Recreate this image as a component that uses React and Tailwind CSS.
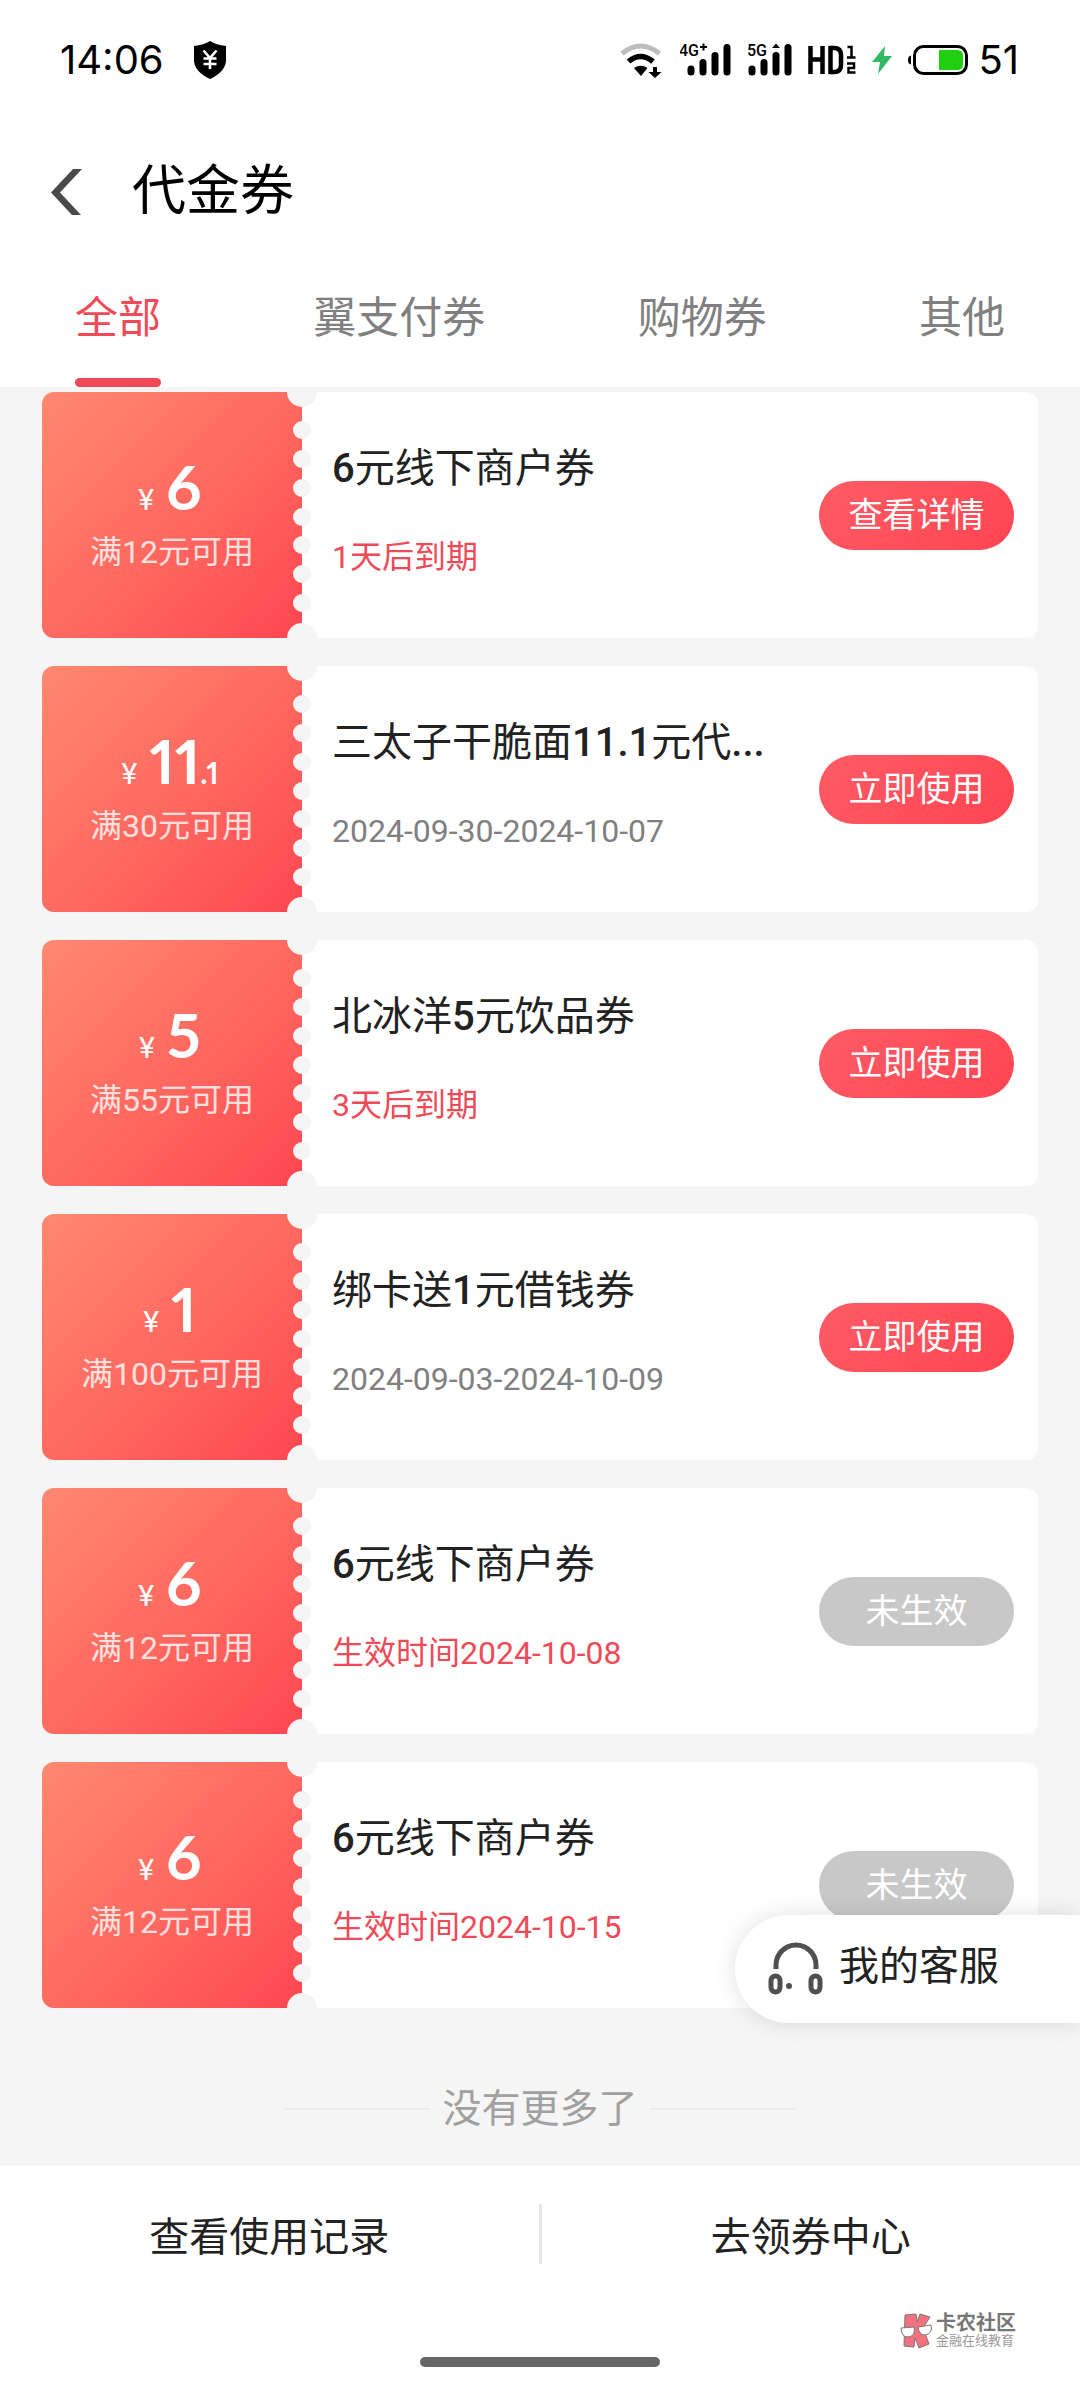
import { useState } from "react";
import clsx from "clsx";

const TABS = ["全部", "翼支付券", "购物券", "其他"];

const COUPONS = [
  { id: 1, amount: "6", limit: "满12元可用", title: "6元线下商户券", note: "1天后到期", urgent: true, action: "查看详情" },
  { id: 2, amount: "11", decimal: ".1", limit: "满30元可用", title: "三太子干脆面11.1元代...", note: "2024-09-30-2024-10-07", action: "立即使用" },
  { id: 3, amount: "5", limit: "满55元可用", title: "北冰洋5元饮品券", note: "3天后到期", urgent: true, action: "立即使用" },
  { id: 4, amount: "1", limit: "满100元可用", title: "绑卡送1元借钱券", note: "2024-09-03-2024-10-09", action: "立即使用" },
  { id: 5, amount: "6", limit: "满12元可用", title: "6元线下商户券", note: "生效时间2024-10-08", urgent: true, action: "未生效", disabled: true },
  { id: 6, amount: "6", limit: "满12元可用", title: "6元线下商户券", note: "生效时间2024-10-15", urgent: true, action: "未生效", disabled: true },
];

const WifiIcon = () => (
  <svg className="h-9 w-11" viewBox="0 0 44 36" fill="none">
    <path d="M2 11.500Q20.500 -3.500 39.500 11.500" stroke="#bdbdbd" strokeWidth="5" />
    <path d="M8.500 19.500Q20.500 9.500 33 19.500" stroke="#000" strokeWidth="5.500" />
    <path d="M14 26Q20.500 21.500 27.500 26L21 34Z" fill="#000" />
    <path d="M33 25h4v5h4.500l-6.500 6-6.500-6h4.500z" fill="#000" />
  </svg>
);

const BARS = "M0 27v3M12 20.500V30";

const Signal4G = () => (
  <svg className="h-9 w-13" viewBox="0 0 52 36">
    <text x="-1" y="14" fontSize="16" fontWeight="500" fontFamily="Roboto, sans-serif">4G</text>
    <path d="M20 5h7M23.500 1.500v7" stroke="#000" strokeWidth="2" />
    <g transform="translate(11)" stroke="#000" strokeWidth="7" strokeLinecap="round">
      <path d={BARS} />
      <path d="M24 13.500V30M36 5.500V30" />
    </g>
  </svg>
);

const Signal5G = () => (
  <svg className="h-9 w-11" viewBox="0 0 44 36">
    <text x="-1" y="14" fontSize="16" fontWeight="500" fontFamily="Roboto, sans-serif">5G</text>
    <path d="M24 6l4-4.500 4 4.500z" />
    <g transform="translate(4)" stroke="#000" strokeWidth="7" strokeLinecap="round">
      <path d={BARS} />
      <path d="M24 13.500V30M36 5.500V30" />
    </g>
  </svg>
);

const BatteryIcon = () => (
  <svg className="h-8 w-15" viewBox="0 0 60 32">
    <path d="M3 11.500Q0 12 0 16t3 4.500z" />
    <rect x="6.500" y="2.500" width="52" height="27" rx="9" fill="none" stroke="#000" strokeWidth="3" />
    <path d="M31 6h18q6 0 6 6v8q0 6-6 6H31z" fill="#20d010" />
  </svg>
);

const StatusBar = () => (
  <div className="flex h-30 items-center justify-between pr-[61px] pl-15">
    <div className="flex items-center gap-7">
      <span className="font-[Inter] text-[40px] leading-none">14:06</span>
      <svg className="h-10 w-9" viewBox="0 0 36 40">
        <path d="M18 1Q24 5 34 6V21Q33 32 18 39Q3 32 2 21V6Q12 5 18 1Z" />
        <path d="M11.500 10.500L18 18l6.500-7.500M18 18v11M11.500 18.500h13M11.500 24h13" fill="none" stroke="#fff" strokeWidth="2.600" />
      </svg>
    </div>
    <div className="flex items-center gap-4">
      <WifiIcon />
      <Signal4G />
      <Signal5G />
      <svg className="h-9 w-12" viewBox="0 0 48 36">
        <path d="M2.500 4v28M14.500 4v28M2.500 17.500h12M22.500 6v24h3.500q7 0 7-7V13q0-7-7-7z" fill="none" stroke="#000" strokeWidth="4.500" />
        <path d="M39.500 5h4v10.500M39 15.500h8.500M39 21.500h7v4.500h-5.500v4.500h7" fill="none" stroke="#000" strokeWidth="2.500" />
      </svg>
      <svg className="h-8 w-5" viewBox="0 0 20 32">
        <path d="M13 2L0 18h8L6 30 20 12h-8z" fill="#33b864" />
      </svg>
      <div className="flex items-center gap-[10px]">
        <BatteryIcon />
        <span className="font-[Inter] text-[40px] leading-none">51</span>
      </div>
    </div>
  </div>
);

// Grey notches punched along the seam between the two halves of a coupon
const Perforation = () => (
  <svg className="absolute top-0 left-[245px] h-full w-[30px]" viewBox="0 0 30 246" fill="#f5f5f5" aria-hidden="true">
    <circle cx="15" cy="0" r="15" />
    {[38, 67, 96, 125, 153, 182, 211].map((cy) => (
      <circle key={cy} cx="15" cy={cy} r="9" />
    ))}
    <circle cx="15" cy="246" r="15" />
  </svg>
);

// Numbers in a title are set heavier than the characters around them
const CouponTitle = ({ text }) => (
  <h2 className="text-[40px] leading-15 whitespace-nowrap text-[#222]">
    {text.split(/([\d.]+)/).map((part, i) =>
      i % 2 ? (
        <span key={i} className="font-medium">{part}</span>
      ) : (
        part
      )
    )}
  </h2>
);

const CouponCard = ({ coupon }) => (
  <li className="relative flex h-[246px] overflow-hidden rounded-xl bg-white">
    <div className="flex w-[260px] shrink-0 flex-col items-center bg-linear-135 from-[#ff8870] to-[#ff4551] pt-16 text-white">
      <p className="flex items-baseline gap-3 pr-1 font-[Lato] leading-15 proportional-nums">
        <span className="font-[Roboto] text-[30px]">¥</span>
        <span className="text-[62px] font-bold">
          {coupon.amount}
          {coupon.decimal && <span className="text-[30px]">{coupon.decimal}</span>}
        </span>
      </p>
      <p className="text-[32px] leading-11 whitespace-nowrap text-white/80">{coupon.limit}</p>
    </div>
    <Perforation />
    <div className="flex min-w-0 flex-1 items-center gap-12 pr-6 pl-[30px]">
      <div className="flex h-full min-w-0 flex-1 flex-col gap-8 pt-[47px]">
        <CouponTitle text={coupon.title} />
        <p className={clsx("text-[32px] leading-13 whitespace-nowrap", coupon.urgent ? "text-[#ee4a58]" : "text-[#808080]")}>
          {coupon.note}
        </p>
      </div>
      <button
        type="button"
        disabled={coupon.disabled}
        className={clsx(
          "h-[69px] w-[195px] shrink-0 rounded-full text-[34px] leading-none text-white",
          coupon.disabled ? "bg-[#c8c8c8]" : "bg-linear-135 from-[#ff5b66] to-[#ff4551]"
        )}
      >
        {coupon.action}
      </button>
    </div>
  </li>
);

const Watermark = () => (
  <div className="absolute right-16 bottom-[51px] flex items-center gap-1">
    <svg className="h-9 w-8" viewBox="0 0 32 36">
      <path d="M5 2L16 1 17 9 20 1 30 4 23 15 29 31 19 35 15 25 14 34 4 33Z" fill="#f4727f" stroke="#777" strokeWidth="1" />
      <path d="M1 15l13-1q2 9-6 10-7 0-7-9zM18 14l13-2q2 9-6 10-6 0-7-8z" fill="#fff" stroke="#777" />
    </svg>
    <div className="flex flex-col">
      <span className="text-[20px] leading-5 font-bold text-[#777]">卡农社区</span>
      <span className="text-[13px] leading-4 text-[#999]">金融在线教育</span>
    </div>
  </div>
);

export default function App() {
  const [activeTab, setActiveTab] = useState(TABS[0]);

  return (
    <div className="relative flex min-h-screen flex-col bg-white font-[Roboto,'Noto_Sans_CJK_SC',sans-serif] text-black">
      <StatusBar />

      <header className="flex h-36 items-center gap-[49px] px-[51px]">
        <button type="button" aria-label="返回">
          <svg className="h-12 w-8" viewBox="0 0 32 48">
            <path d="M22 1h9L9 24.500 30 47h-9L0 24.500z" fill="#4a4a4a" />
          </svg>
        </button>
        <h1 className="text-[54px] leading-none">代金券</h1>
      </header>

      <nav className="flex h-[123px] justify-between px-[75px]">
        {TABS.map((tab) => (
          <button
            key={tab}
            type="button"
            onClick={() => setActiveTab(tab)}
            className={clsx(
              "flex flex-col justify-between pt-[22px] text-[43px] leading-[64px]",
              tab === activeTab ? "text-[#f04a58]" : "text-[#808080]"
            )}
          >
            {tab}
            {tab === activeTab && <span className="h-[9px] w-full rounded-full bg-[#f04a58]" />}
          </button>
        ))}
      </nav>

      <main className="flex-1 bg-[#f5f5f5] px-[42px] pt-[5px]">
        <ul className="flex flex-col gap-7">
          {COUPONS.map((coupon) => (
            <CouponCard key={coupon.id} coupon={coupon} />
          ))}
        </ul>
        <div className="flex items-center justify-center gap-3 pt-[71px] pb-[27px]">
          <span className="h-[2px] w-[145px] bg-[#ececec]" />
          <p className="text-[39px] leading-15 text-[#a0a0a0]">没有更多了</p>
          <span className="h-[2px] w-[145px] bg-[#ececec]" />
        </div>
      </main>

      <footer className="flex h-[234px] flex-col items-center justify-between pt-8 pb-[33px]">
        <div className="flex h-18 w-full items-center text-[40px] text-[#222]">
          <a href="#records" className="flex-1 pt-2 text-center">查看使用记录</a>
          <span className="h-15 w-[3px] bg-[#e5e5e5]" />
          <a href="#center" className="flex-1 pt-2 text-center">去领券中心</a>
        </div>
        <span className="h-[10px] w-60 rounded-full bg-[#666]" />
      </footer>

      <button
        type="button"
        className="absolute right-0 bottom-[377px] flex h-[108px] w-[345px] items-center gap-4 rounded-l-full bg-white pb-1 pl-8 text-[40px] text-[#222] shadow-[0_0_24px_rgba(0,0,0,0.12)]"
      >
        <svg className="h-14 w-14" viewBox="0 0 56 56" fill="none" stroke="#505050">
          <path d="M9 30V26a20 20 0 0 1 40 0v4" strokeWidth="5" />
          <rect x="4" y="37" width="9" height="16" rx="4.500" strokeWidth="5" />
          <rect x="44" y="37" width="9" height="16" rx="4.500" strokeWidth="5" />
          <circle cx="22" cy="47" r="3" fill="#505050" stroke="none" />
        </svg>
        我的客服
      </button>
      <Watermark />
    </div>
  );
}
